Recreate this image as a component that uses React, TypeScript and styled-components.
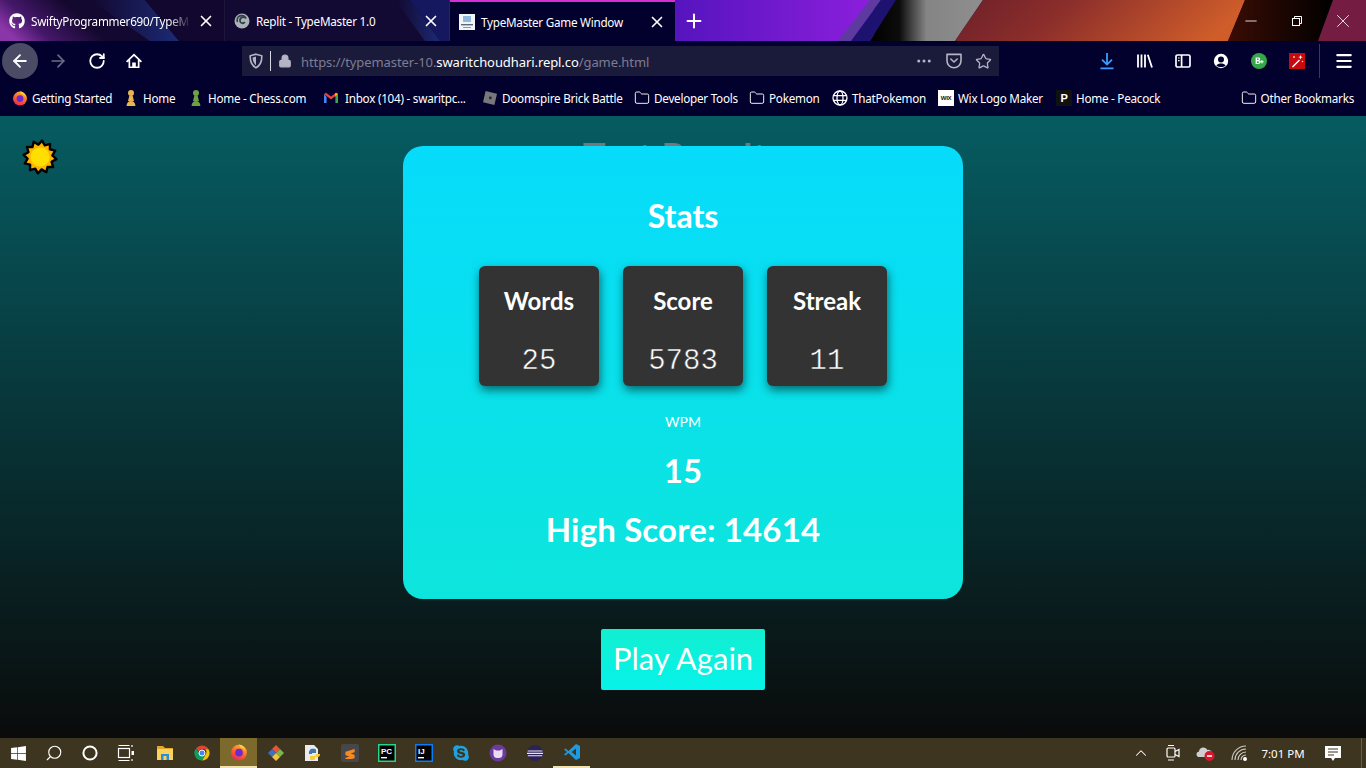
import React from 'react'
import styled, { createGlobalStyle } from 'styled-components'
import { ArrowLeft, ArrowRight, RotateCw, Lock, Star, MoreHorizontal, X, Plus, Menu, Minus, ChevronUp, Search, Folder } from 'lucide-react'
import { FaGithub, FaWindows, FaSkype } from 'react-icons/fa'
import { SiSublimetext } from 'react-icons/si'

const UI_FONT = `"Noto Sans", "Open Sans", sans-serif`
const GAME_FONT = `"Lato", "Noto Sans", sans-serif`
const BAR = '#02012e'

const GlobalStyle = createGlobalStyle`
  html, body {
    margin: 0;
    padding: 0;
    height: 100%;
    overflow: hidden;
    background: #000;
  }
  * { box-sizing: border-box; }
`

const Screen = styled.div`
  width: 1366px;
  height: 768px;
  display: flex;
  flex-direction: column;
  overflow: hidden;
`

const TitleBar = styled.div`
  position: relative;
  height: 41px;
  flex: none;
  display: flex;
  background: #130a33;
`

const ThemeArt = styled.svg`
  position: absolute;
  left: 0;
  top: 0;
`

const Tab = styled.div<{ $active?: boolean }>`
  position: relative;
  width: 225px;
  height: 41px;
  flex: none;
  display: flex;
  align-items: center;
  padding: 0 9px 0 9px;
  gap: 6px;
  color: #fff;
  font: 11.7px ${UI_FONT};
  letter-spacing: -0.25px;
  background: ${({ $active }) => ($active ? BAR : 'transparent')};
  border-top: ${({ $active }) => ($active ? '2px solid #d62fd2' : '0')};
  border-right: ${({ $active }) => ($active ? '0' : '1px solid rgba(255,255,255,.06)')};
`

const TabText = styled.span<{ $fade?: boolean }>`
  flex: 1;
  white-space: nowrap;
  -webkit-mask-image: ${({ $fade }) => ($fade ? 'linear-gradient(90deg, #000 86%, transparent)' : 'none')};
  mask-image: ${({ $fade }) => ($fade ? 'linear-gradient(90deg, #000 86%, transparent)' : 'none')};
`

const NewTab = styled.div`
  position: relative;
  width: 40px;
  margin-left: -1px;
  display: flex;
  align-items: center;
  justify-content: center;
  color: #fff;
`

const WindowButtons = styled.div`
  position: relative;
  margin-left: auto;
  display: flex;
  height: 41px;
`

const WindowButton = styled.div`
  width: 46px;
  display: flex;
  align-items: center;
  justify-content: center;
  color: #fff;
`

const NavBar = styled.div`
  height: 40px;
  flex: none;
  display: flex;
  align-items: center;
  background: ${BAR};
  color: #fff;
`

const NavButton = styled.div<{ $w: number; $round?: boolean; $dim?: boolean }>`
  width: ${({ $w }) => $w}px;
  height: 36px;
  flex: none;
  display: flex;
  align-items: center;
  justify-content: center;
  border-radius: ${({ $round }) => ($round ? '50%' : '0')};
  background: ${({ $round }) => ($round ? '#4b4b66' : 'transparent')};
  color: ${({ $dim }) => ($dim ? '#6d6c86' : '#fff')};
`

const NavStart = styled.div`
  width: 242px;
  flex: none;
  display: flex;
  align-items: center;
  padding-left: 2px;
`

const UrlBar = styled.div`
  width: 757px;
  height: 30px;
  flex: none;
  display: flex;
  align-items: center;
  background: #1a1b3b;
  color: #8b8b9e;
  font: 13px ${UI_FONT};
  padding: 0 7px 0 6px;
`

const UrlDivider = styled.span`
  width: 1px;
  height: 20px;
  background: #d8d8e0;
  margin: 0 7px 0 6px;
`

const UrlText = styled.span`
  flex: 1;
  margin-left: 9px;
  padding-top: 1px;
  white-space: nowrap;
  letter-spacing: -0.08px;
  color: #7d7d92;
`

const UrlHost = styled.span`
  color: #fff;
`

const UrlIcons = styled.div`
  display: flex;
  align-items: center;
  gap: 12px;
  color: #b4b4c4;
`

const ToolIcons = styled.div`
  display: flex;
  align-items: center;
  margin-left: 89px;
`

const ToolDivider = styled.span`
  width: 1px;
  height: 34px;
  background: #3a3a58;
  margin: 0 5px 0 3px;
`

const Bookmarks = styled.div`
  height: 35px;
  flex: none;
  display: flex;
  align-items: center;
  background: ${BAR};
  padding-left: 12px;
  padding-bottom: 1px;
`

const Bookmark = styled.div<{ $w: number; $gap?: number }>`
  width: ${({ $w }) => $w}px;
  flex: none;
  display: flex;
  align-items: center;
  gap: ${({ $gap }) => $gap ?? 4}px;
  color: #fff;
  font: 11.7px ${UI_FONT};
  letter-spacing: -0.25px;
  white-space: nowrap;
`

const BookmarkEnd = styled(Bookmark)`
  margin-left: auto;
  padding-right: 12px;
  width: auto;
`

const WixBadge = styled.span`
  width: 16px;
  height: 16px;
  background: #fff;
  color: #111;
  font: bold 6px "Liberation Sans", sans-serif;
  letter-spacing: -0.3px;
  display: flex;
  align-items: center;
  justify-content: center;
`

const PeacockBadge = styled.span`
  width: 16px;
  height: 16px;
  background: #111;
  color: #fff;
  font: bold 11px "Liberation Sans", sans-serif;
  display: flex;
  align-items: center;
  justify-content: center;
`

const Page = styled.main`
  position: relative;
  flex: 1;
  display: flex;
  flex-direction: column;
  align-items: center;
  padding-top: 30px;
  background: linear-gradient(#065c62, #0a0b0b);
`

const SunToggle = styled.svg`
  position: absolute;
  left: 22px;
  top: 23px;
`

const HiddenTitle = styled.h1`
  position: absolute;
  top: 17px;
  left: 0;
  right: 0;
  margin: 0;
  text-align: center;
  font: bold 38px ${GAME_FONT};
  color: #777;
`

const Card = styled.section`
  position: relative;
  width: 560px;
  height: 453px;
  border-radius: 20px;
  background: linear-gradient(#06dcfb, #0de5dc);
  color: #fff;
  font-family: ${GAME_FONT};
  display: flex;
  flex-direction: column;
  align-items: center;
  padding-top: 51px;
`

const CardTitle = styled.h2`
  margin: 0;
  font-size: 32px;
  line-height: 38px;
  font-weight: 700;
`

const StatRow = styled.div`
  display: flex;
  gap: 24px;
  margin-top: 31px;
`

const StatBox = styled.div`
  width: 120px;
  height: 120px;
  border-radius: 6px;
  background: #333;
  box-shadow: 1px 4px 10px rgba(0, 0, 0, 0.55);
  display: flex;
  flex-direction: column;
  align-items: center;
  padding-top: 20px;
`

const StatLabel = styled.div`
  font-size: 24px;
  line-height: 30px;
  font-weight: 700;
`

// Liberation Mono is heavier than the Courier of the picture, the stroke in the box colour thins it
const StatValue = styled.div`
  margin-top: 29px;
  font: 29px/34px "Liberation Mono", monospace;
  -webkit-text-stroke: 0.5px #333;
`

const WpmLabel = styled.div`
  margin-top: 26px;
  font-size: 14px;
  line-height: 20px;
`

const BigLine = styled.div<{ $top: number }>`
  margin-top: ${({ $top }) => $top}px;
  font-size: 33px;
  line-height: 40px;
  font-weight: 700;
  letter-spacing: 0.15px;
`

const PlayAgain = styled.button`
  margin-top: 30px;
  width: 164px;
  height: 61px;
  padding: 0 0 3px;
  border: 0;
  border-radius: 2px;
  background: linear-gradient(#12efd0, #06f2ea);
  color: #fff;
  font: 31px ${GAME_FONT};
`

const Taskbar = styled.footer`
  height: 30px;
  flex: none;
  display: flex;
  align-items: center;
  background: #3e3520;
  color: #fff;
`

const TaskSlot = styled.div<{ $w: number; $active?: boolean; $open?: boolean }>`
  width: ${({ $w }) => $w}px;
  height: 30px;
  flex: none;
  display: flex;
  align-items: center;
  justify-content: center;
  background: ${({ $active }) => ($active ? '#7b6a2c' : 'transparent')};
  border-bottom: ${({ $active, $open }) => ($active || $open ? '2px solid #f0e2b0' : '0')};
`

const AppIcons = styled.div`
  display: flex;
  margin-left: 2px;
`

const Tray = styled.div`
  margin-left: auto;
  display: flex;
  align-items: center;
`

const Clock = styled.div`
  width: 56px;
  margin-right: 5px;
  text-align: center;
  font: 11.5px ${UI_FONT};
`

const TrayEdge = styled.span`
  width: 1px;
  height: 30px;
  background: #6a5f40;
  margin-left: 11px;
  margin-right: 4px;
`

function ThemeBackground (): React.ReactElement {
  return (
    <ThemeArt width={1366} height={41}>
      <defs>
        <linearGradient id='leftGlow' x1='0' x2='1' y1='0.6' y2='0.4'>
          <stop offset='0' stopColor='#8a35a8' />
          <stop offset='0.14' stopColor='#45186a' />
          <stop offset='0.38' stopColor='#14082f' />
          <stop offset='1' stopColor='#110830' />
        </linearGradient>
        <linearGradient id='blueWedge' x1='0' x2='1' y1='0' y2='0'>
          <stop offset='0' stopColor='#12082f' />
          <stop offset='1' stopColor='#1c2a74' />
        </linearGradient>
        <linearGradient id='violet' x1='0' x2='1' y1='0' y2='0'>
          <stop offset='0' stopColor='#5514be' />
          <stop offset='1' stopColor='#8c1fdc' />
        </linearGradient>
        <linearGradient id='steel' x1='0' x2='1' y1='0' y2='0'>
          <stop offset='0' stopColor='#000' />
          <stop offset='0.26' stopColor='#0c0c0c' />
          <stop offset='0.5' stopColor='#858585' />
          <stop offset='1' stopColor='#8e8e8e' />
        </linearGradient>
        <linearGradient id='ember' x1='0' x2='1' y1='0' y2='0.15'>
          <stop offset='0' stopColor='#6d2029' />
          <stop offset='0.4' stopColor='#8c2e2b' />
          <stop offset='1' stopColor='#cf5d2a' />
        </linearGradient>
        <linearGradient id='soot' x1='0' x2='1' y1='0' y2='0'>
          <stop offset='0' stopColor='#3a0c04' />
          <stop offset='1' stopColor='#000' />
        </linearGradient>
      </defs>
      <rect width={225} height={41} fill='url(#leftGlow)' />
      <polygon points='90,0 145,0 179,41 150,41' fill='url(#blueWedge)' />
      <polygon points='179,41 145,0 225,0 225,41' fill='#12082f' />
      <polygon points='395,0 410,0 440,41 425,41' fill='url(#blueWedge)' />
      <polygon points='410,0 450,0 450,41 440,41' fill='#16185f' />
      <rect x={674} width={200} height={41} fill='url(#violet)' />
      <polygon points='870,0 881,0 851,41 838,41' fill='#5e3aa0' />
      <polygon points='881,0 896,0 870,41 851,41' fill='#1e1270' />
      <polygon points='896,0 983,0 955,41 870,41' fill='url(#steel)' />
      <polygon points='983,0 1245,0 1228,41 955,41' fill='url(#ember)' />
      <polygon points='1245,0 1333,0 1318,41 1228,41' fill='url(#soot)' />
      <polygon points='1333,0 1366,0 1366,41 1318,41' fill='#741c42' />
    </ThemeArt>
  )
}

function FirefoxIcon ({ size = 16 }: { size?: number }): React.ReactElement {
  return (
    <svg width={size} height={size} viewBox='0 0 16 16'>
      <defs>
        <linearGradient id='ffBody' x1='0.7' x2='0.2' y1='0' y2='1'>
          <stop offset='0' stopColor='#ffb52e' />
          <stop offset='0.55' stopColor='#ff5a2c' />
          <stop offset='1' stopColor='#e0246a' />
        </linearGradient>
      </defs>
      <circle cx={8} cy={8.6} r={7} fill='url(#ffBody)' />
      <circle cx={8} cy={8.6} r={3.4} fill='#6a2bd0' />
      <path d='M8 1c3 1 5.5 3 6 6.5-1-2-2.5-3-4.5-3.5z' fill='#ffd04a' />
    </svg>
  )
}

function PawnIcon ({ color }: { color: string }): React.ReactElement {
  return (
    <svg width={16} height={18} viewBox='0 0 16 18'>
      <circle cx={8} cy={4} r={3} fill={color} />
      <path d='M6.4 6.5h3.2L11 12H5zM3.6 17c0-3 1.5-5 4.4-5s4.4 2 4.4 5z' fill={color} />
    </svg>
  )
}

function GmailIcon (): React.ReactElement {
  return (
    <svg width={16} height={16} viewBox='0 0 16 16'>
      <path d='M1 4v9h2.6V7z' fill='#4285f4' />
      <path d='M15 4v9h-2.6V7z' fill='#34a853' />
      <path d='M1 4l7 5.4L15 4l-2-1.2L8 6.4 3 2.8z' fill='#ea4335' />
      <path d='M12.4 7L15 4l-2-1.2-1 .8z' fill='#fbbc04' />
    </svg>
  )
}

function RobloxIcon (): React.ReactElement {
  return (
    <svg width={16} height={16} viewBox='0 0 16 16'>
      <polygon points='3.6,1 15,3.8 12.4,15 1,12.2' fill='#77777c' />
      <rect x={7} y={6.6} width={2.6} height={2.6} fill='#2b2b34' />
    </svg>
  )
}

function GlobeIcon (): React.ReactElement {
  return (
    <svg width={16} height={16} viewBox='0 0 16 16' fill='none' stroke='#fff' strokeWidth={1.3}>
      <circle cx={8} cy={8} r={7} />
      <ellipse cx={8} cy={8} rx={3} ry={7} />
      <path d='M1.3 5.6h13.4M1.3 10.4h13.4' />
    </svg>
  )
}

function ShieldIcon (): React.ReactElement {
  return (
    <svg width={16} height={16} viewBox='0 0 16 16' fill='none'>
      <path d='M8 1.2l5.8 1.6c.2 5.4-1.6 9.6-5.8 12-4.2-2.4-6-6.6-5.8-12z' stroke='#b4b4c4' strokeWidth={1.6} />
      <path d='M8 3.6v8.6c-2.4-1.8-3.4-4.4-3.4-7.6z' fill='#b4b4c4' />
    </svg>
  )
}

function PocketIcon (): React.ReactElement {
  return (
    <svg width={18} height={18} viewBox='0 0 18 18' fill='none' stroke='#b4b4c4' strokeWidth={1.6} strokeLinecap='round' strokeLinejoin='round'>
      <path d='M2 2.4h14v6.4a7 7 0 0 1-14 0z' />
      <path d='M5.8 7L9 10l3.2-3' />
    </svg>
  )
}

function HomeIcon (): React.ReactElement {
  return (
    <svg width={18} height={18} viewBox='0 0 18 18'>
      <path d='M9 1.5L1 9.2l1.2 1.2L3.5 9.2V16h11V9.2l1.3 1.2L17 9.2zM5.2 14.4V7.6L9 3.9l3.8 3.7v6.8h-2v-4H7.2v4z' fill='#fff' />
    </svg>
  )
}

function DownloadIcon (): React.ReactElement {
  return (
    <svg width={18} height={18} viewBox='0 0 18 18' fill='none' stroke='#3d9bff' strokeWidth={1.8}>
      <path d='M9 1v11M4 7.6L9 12.6l5-5M2.5 16.4h13' />
    </svg>
  )
}

function LibraryIcon (): React.ReactElement {
  return (
    <svg width={18} height={18} viewBox='0 0 18 18' fill='none' stroke='#fff' strokeWidth={1.8}>
      <path d='M2 2.5v13M5.5 2.5v13M9 2.5v13M11.8 2.8L16 15.5' />
    </svg>
  )
}

function SidebarIcon (): React.ReactElement {
  return (
    <svg width={18} height={18} viewBox='0 0 18 18' fill='none' stroke='#fff' strokeWidth={1.7}>
      <rect x={2} y={3} width={14} height={12} rx={1.6} />
      <path d='M7.6 3v12' />
      <path d='M4 6h1.6M4 8.6h1.6' strokeWidth={1.2} />
    </svg>
  )
}

function AccountIcon (): React.ReactElement {
  return (
    <svg width={16} height={16} viewBox='0 0 16 16'>
      <circle cx={8} cy={8} r={7.2} fill='#fff' />
      <circle cx={8} cy={6.6} r={3} fill={BAR} />
      <path d='M3.4 12.4C4.6 10.8 6 10.4 8 10.4s3.4.4 4.6 2C11.4 13.6 9.8 14 8 14s-3.4-.4-4.6-1.6z' fill={BAR} />
    </svg>
  )
}

function GradeIcon (): React.ReactElement {
  return (
    <svg width={18} height={18} viewBox='0 0 18 18'>
      <circle cx={9} cy={9} r={8} fill='#36a64a' />
      <path d='M5.6 5.4h2.6c1.4 0 2 .7 2 1.7 0 .7-.4 1.2-1 1.4.8.2 1.2.8 1.2 1.6 0 1.2-.8 1.9-2.2 1.9H5.6zM7 6.5v1.6h1c.5 0 .8-.3.8-.8s-.3-.8-.8-.8zm0 2.7v1.8h1.1c.6 0 .9-.3.9-.9s-.3-.9-.9-.9zM11.4 8h1v1.2h1.2v1h-1.2v1.2h-1v-1.2h-1.2v-1h1.2z' fill='#fff' />
    </svg>
  )
}

function WandIcon (): React.ReactElement {
  return (
    <svg width={16} height={16} viewBox='0 0 16 16'>
      <rect width={16} height={16} fill='#c80a0f' />
      <path d='M3 13.5l7-7 1 1-7 7z' fill='#fff' />
      <path d='M11.5 2l.6 1.6 1.6.6-1.6.6-.6 1.6-.6-1.6-1.6-.6 1.6-.6z' fill='#fff' />
      <circle cx={5} cy={4} r={0.9} fill='#ffd9a0' />
      <circle cx={13.5} cy={8.5} r={0.8} fill='#ffd9a0' />
    </svg>
  )
}

function RestoreIcon (): React.ReactElement {
  return (
    <svg width={10} height={10} viewBox='0 0 10 10' fill='none' stroke='#fff'>
      <rect x={0.5} y={2.5} width={7} height={7} />
      <path d='M2.5 2.5V.5h7v7h-2' />
    </svg>
  )
}

function ReplitFavicon (): React.ReactElement {
  return (
    <svg width={16} height={16} viewBox='0 0 16 16' fill='none'>
      <circle cx={8} cy={8} r={7.5} fill='#a9b2b6' />
      <path d='M3.5 9A4.6 4.6 0 0 1 12 5.4 3.4 3.4 0 0 0 6 8a2.6 2.6 0 0 0 4.8 1' stroke='#33414a' strokeWidth={1.8} />
    </svg>
  )
}

function GameFavicon (): React.ReactElement {
  return (
    <svg width={16} height={16} viewBox='0 0 16 16'>
      <rect width={16} height={16} fill='#f2f5f8' />
      <rect x={4} y={2} width={8} height={6} fill='#8fb8dc' />
      <rect x={2} y={10} width={12} height={1.4} fill='#5a6a7c' />
      <rect x={4} y={13} width={8} height={1} fill='#8c97a5' />
    </svg>
  )
}

function SunIcon (): React.ReactElement {
  const points: string[] = []
  for (let i = 0; i < 24; i++) {
    const angle = (i / 24) * Math.PI * 2 + 0.13
    const radius = i % 2 === 0 ? 16.5 : 12.5
    points.push(`${(18 + Math.cos(angle) * radius).toFixed(1)},${(18 + Math.sin(angle) * radius).toFixed(1)}`)
  }
  return (
    <SunToggle width={36} height={36} viewBox='0 0 36 36'>
      <polygon points={points.join(' ')} fill='#ffb400' stroke='#000' strokeWidth={2.4} strokeLinejoin='round' />
      <circle cx={18} cy={18} r={9.5} fill='#ffde00' />
    </SunToggle>
  )
}

function CortanaIcon (): React.ReactElement {
  return (
    <svg width={18} height={18} viewBox='0 0 18 18' fill='none' stroke='#fff' strokeWidth={2}>
      <circle cx={9} cy={9} r={6.6} />
    </svg>
  )
}

function TaskViewIcon (): React.ReactElement {
  return (
    <svg width={18} height={18} viewBox='0 0 18 18' fill='none' stroke='#fff' strokeWidth={1.2}>
      <rect x={1.5} y={4.5} width={11} height={9} />
      <path d='M1.5 1.5h11M1.5 16.5h11M15 1v2M15 15v2' />
      <rect x={14.5} y={7} width={2.5} height={4} fill='#fff' stroke='none' />
    </svg>
  )
}

function ExplorerIcon (): React.ReactElement {
  return (
    <svg width={18} height={16} viewBox='0 0 18 16'>
      <path d='M1 1h6l2 2h8v2H1z' fill='#e0a92e' />
      <rect x={1} y={4} width={16} height={11} fill='#fbd35c' />
      <rect x={5} y={9} width={8} height={6} fill='#2a8fd8' />
      <rect x={7.5} y={11} width={3} height={4} fill='#fbd35c' />
    </svg>
  )
}

function ChromeIcon (): React.ReactElement {
  return (
    <svg width={16} height={16} viewBox='0 0 16 16'>
      <path d='M8 .5a7.5 7.5 0 0 1 6.5 3.75H8A3.75 3.75 0 0 0 4.6 6.4L2.2 3.2A7.5 7.5 0 0 1 8 .5z' fill='#db4437' />
      <path d='M14.5 4.25A7.5 7.5 0 0 1 8 15.5l3.2-5.6a3.75 3.75 0 0 0 0-5.65z' fill='#f4c20d' />
      <path d='M8 15.5A7.5 7.5 0 0 1 2.2 3.2l3.2 5.6A3.75 3.75 0 0 0 11.2 9.9z' fill='#0f9d58' />
      <circle cx={8} cy={8} r={3} fill='#4285f4' stroke='#fff' />
    </svg>
  )
}

function GitIcon (): React.ReactElement {
  return (
    <svg width={18} height={18} viewBox='0 0 18 18'>
      <polygon points='9,1 13,5 9,9 5,5' fill='#e8543a' />
      <polygon points='5,5 9,9 5,13 1,9' fill='#3d6fc4' />
      <polygon points='13,5 17,9 13,13 9,9' fill='#7ab648' />
      <polygon points='9,9 13,13 9,17 5,13' fill='#f2c341' />
    </svg>
  )
}

function PythonFileIcon (): React.ReactElement {
  return (
    <svg width={17} height={18} viewBox='0 0 17 18'>
      <path d='M1 1h9l4 4v12H1z' fill='#e9e9ee' />
      <path d='M6 6c0-1.6 6-1.6 6 0v3H8v1H5V8c0-1 1-2 1-2z' fill='#3c78aa' />
      <path d='M16 10c0 2-1 3-2 3h-3v2c0 1.4-5 1.4-5 0v-3h5c1 0 1-2 1-2z' fill='#f6cc3d' />
    </svg>
  )
}

function SublimeIcon (): React.ReactElement {
  return (
    <svg width={18} height={18} viewBox='0 0 18 18'>
      <rect width={18} height={18} rx={2} fill='#47474b' />
      <foreignObject x={3} y={3} width={12} height={12}>
        <SiSublimetext size={12} color='#f68a1f' />
      </foreignObject>
    </svg>
  )
}

function IdeIcon ({ label, edge }: { label: string; edge: string }): React.ReactElement {
  return (
    <svg width={18} height={18} viewBox='0 0 18 18'>
      <rect x={0.75} y={0.75} width={16.5} height={16.5} fill='#000' stroke={edge} strokeWidth={1.5} />
      <text x={3} y={10} fontSize={8} fontWeight={700} fontFamily='Liberation Sans, sans-serif' fill='#fff'>{label}</text>
      <rect x={3} y={13} width={6} height={1.4} fill='#fff' />
    </svg>
  )
}

function CatIcon (): React.ReactElement {
  return (
    <svg width={18} height={18} viewBox='0 0 18 18'>
      <circle cx={9} cy={9} r={8.5} fill='#6d3b9e' />
      <path d='M4.5 5l2.6 1.6h3.8L13.5 5v6a3.6 3.6 0 0 1-3.6 3H8.1a3.6 3.6 0 0 1-3.6-3z' fill='#e9ddf4' />
    </svg>
  )
}

function EclipseIcon (): React.ReactElement {
  return (
    <svg width={18} height={18} viewBox='0 0 18 18'>
      <circle cx={9} cy={9} r={8} fill='#2c2255' />
      <path d='M1.6 7h14.8M1 9.4h16M1.8 11.8h14.4' stroke='#e9e6f2' strokeWidth={1.1} />
    </svg>
  )
}

function VsCodeIcon (): React.ReactElement {
  return (
    <svg width={18} height={18} viewBox='0 0 18 18'>
      <path d='M13 1l4 2v12l-4 2L5.5 10l-3 2.4L1 11.5 4 9 1 6.5l1.5-.9 3 2.4zM13 5.4L8.6 9l4.4 3.6z' fill='#1e9be0' />
    </svg>
  )
}

function MeetIcon (): React.ReactElement {
  return (
    <svg width={16} height={18} viewBox='0 0 16 18' fill='none' stroke='#fff' strokeWidth={1.2}>
      <rect x={2} y={4} width={8} height={9} rx={1} />
      <path d='M10 7.5l4-2v7l-4-2M3 1.5h6M3 16h6' />
    </svg>
  )
}

function OneDriveIcon (): React.ReactElement {
  return (
    <svg width={20} height={18} viewBox='0 0 20 18'>
      <path d='M2 13a3 3 0 0 1 1-5.6A4.5 4.5 0 0 1 11.5 6 3.6 3.6 0 0 1 16 9v4z' fill='#cfcfcf' />
      <circle cx={13.5} cy={12} r={5} fill='#d8182a' />
      <rect x={11} y={11.2} width={5} height={1.6} fill='#fff' />
    </svg>
  )
}

function WifiIcon (): React.ReactElement {
  return (
    <svg width={16} height={16} viewBox='0 0 16 16' fill='none' stroke='#fff' strokeWidth={1.1}>
      <path d='M1 15a14 14 0 0 1 14-14M4 15a11 11 0 0 1 11-11M7 15a8 8 0 0 1 8-8M10 15a5 5 0 0 1 5-5' opacity={0.75} />
      <circle cx={14} cy={14} r={1.4} fill='#fff' />
    </svg>
  )
}

function NotifyIcon (): React.ReactElement {
  return (
    <svg width={18} height={18} viewBox='0 0 18 18'>
      <path d='M1 2h16v12h-6l-2 3-2-3H1z' fill='#fff' />
      <path d='M4 5h10M4 8h10M4 11h6' stroke='#3e3520' strokeWidth={1} />
    </svg>
  )
}

const bookmarks = [
  { w: 111, label: 'Getting Started', icon: <FirefoxIcon /> },
  { w: 65, label: 'Home', icon: <PawnIcon color='#e8b552' /> },
  { w: 135, label: 'Home - Chess.com', icon: <PawnIcon color='#6fa044' /> },
  { w: 159, label: 'Inbox (104) - swaritpc...', icon: <GmailIcon />, gap: 6 },
  { w: 152, label: 'Doomspire Brick Battle', icon: <RobloxIcon /> },
  { w: 115, label: 'Developer Tools', icon: <Folder size={16} strokeWidth={1.4} /> },
  { w: 83, label: 'Pokemon', icon: <Folder size={16} strokeWidth={1.4} /> },
  { w: 106, label: 'ThatPokemon', icon: <GlobeIcon /> },
  { w: 118, label: 'Wix Logo Maker', icon: <WixBadge>WIX</WixBadge> },
  { w: 150, label: 'Home - Peacock', icon: <PeacockBadge>P</PeacockBadge> }
]

const stats = [
  { label: 'Words', value: '25' },
  { label: 'Score', value: '5783' },
  { label: 'Streak', value: '11' }
]

const taskApps = [
  { id: 'explorer', icon: <ExplorerIcon /> },
  { id: 'chrome', icon: <ChromeIcon /> },
  { id: 'firefox', icon: <FirefoxIcon size={18} />, active: true },
  { id: 'git', icon: <GitIcon /> },
  { id: 'python', icon: <PythonFileIcon /> },
  { id: 'sublime', icon: <SublimeIcon /> },
  { id: 'pycharm', icon: <IdeIcon label='PC' edge='#21d789' /> },
  { id: 'intellij', icon: <IdeIcon label='IJ' edge='#087cfa' /> },
  { id: 'skype', icon: <FaSkype size={18} color='#1fa3e0' /> },
  { id: 'cat', icon: <CatIcon /> },
  { id: 'eclipse', icon: <EclipseIcon /> },
  { id: 'vscode', icon: <VsCodeIcon />, open: true }
]

export default function App (): React.ReactElement {
  return (
    <Screen>
      <GlobalStyle />
      <TitleBar>
        <ThemeBackground />
        <Tab>
          <FaGithub size={16} />
          <TabText $fade>SwiftyProgrammer690/TypeM</TabText>
          <X size={18} strokeWidth={2.2} />
        </Tab>
        <Tab>
          <ReplitFavicon />
          <TabText>Replit - TypeMaster 1.0</TabText>
          <X size={18} strokeWidth={2.2} />
        </Tab>
        <Tab $active>
          <GameFavicon />
          <TabText>TypeMaster Game Window</TabText>
          <X size={18} strokeWidth={2.2} />
        </Tab>
        <NewTab><Plus size={22} strokeWidth={2.2} /></NewTab>
        <WindowButtons>
          <WindowButton><Minus size={18} strokeWidth={1.1} /></WindowButton>
          <WindowButton><RestoreIcon /></WindowButton>
          <WindowButton><X size={22} strokeWidth={0.9} /></WindowButton>
        </WindowButtons>
      </TitleBar>
      <NavBar>
        <NavStart>
          <NavButton $w={36} $round><ArrowLeft size={20} strokeWidth={2.2} /></NavButton>
          <NavButton $w={40} $dim><ArrowRight size={20} strokeWidth={2} /></NavButton>
          <NavButton $w={38}><RotateCw size={18} strokeWidth={2.4} /></NavButton>
          <NavButton $w={36}><HomeIcon /></NavButton>
        </NavStart>
        <UrlBar>
          <ShieldIcon />
          <UrlDivider />
          <Lock size={14} fill='#b4b4c4' color='#b4b4c4' />
          <UrlText>https://typemaster-10.<UrlHost>swaritchoudhari.repl.co</UrlHost>/game.html</UrlText>
          <UrlIcons>
            <MoreHorizontal size={18} />
            <PocketIcon />
            <Star size={17} strokeWidth={1.8} />
          </UrlIcons>
        </UrlBar>
        <ToolIcons>
          <NavButton $w={38}><DownloadIcon /></NavButton>
          <NavButton $w={38}><LibraryIcon /></NavButton>
          <NavButton $w={38}><SidebarIcon /></NavButton>
          <NavButton $w={38}><AccountIcon /></NavButton>
          <NavButton $w={38}><GradeIcon /></NavButton>
          <NavButton $w={38}><WandIcon /></NavButton>
          <ToolDivider />
          <NavButton $w={38}><Menu size={20} strokeWidth={2.6} /></NavButton>
        </ToolIcons>
      </NavBar>
      <Bookmarks>
        {bookmarks.map((item) => (
          <Bookmark $w={item.w} $gap={item.gap} key={item.label}>{item.icon}{item.label}</Bookmark>
        ))}
        <BookmarkEnd $w={0}><Folder size={16} strokeWidth={1.4} />Other Bookmarks</BookmarkEnd>
      </Bookmarks>
      <Page>
        <SunIcon />
        <HiddenTitle>Test Results</HiddenTitle>
        <Card>
          <CardTitle>Stats</CardTitle>
          <StatRow>
            {stats.map((stat) => (
              <StatBox key={stat.label}>
                <StatLabel>{stat.label}</StatLabel>
                <StatValue>{stat.value}</StatValue>
              </StatBox>
            ))}
          </StatRow>
          <WpmLabel>WPM</WpmLabel>
          <BigLine $top={18}>15</BigLine>
          <BigLine $top={19}>High Score: 14614</BigLine>
        </Card>
        <PlayAgain>Play Again</PlayAgain>
      </Page>
      <Taskbar>
        <TaskSlot $w={36}><FaWindows size={17} /></TaskSlot>
        <TaskSlot $w={36}><Search size={18} strokeWidth={1.5} style={{ transform: 'scaleX(-1)' }} /></TaskSlot>
        <TaskSlot $w={36}><CortanaIcon /></TaskSlot>
        <TaskSlot $w={36}><TaskViewIcon /></TaskSlot>
        <AppIcons>
          {taskApps.map((app) => (
            <TaskSlot $w={37} $active={app.active} $open={app.open} key={app.id}>{app.icon}</TaskSlot>
          ))}
        </AppIcons>
        <Tray>
          <TaskSlot $w={32}><ChevronUp size={18} strokeWidth={1.4} /></TaskSlot>
          <TaskSlot $w={32}><MeetIcon /></TaskSlot>
          <TaskSlot $w={33}><OneDriveIcon /></TaskSlot>
          <TaskSlot $w={33}><WifiIcon /></TaskSlot>
          <Clock>7:01 PM</Clock>
          <TaskSlot $w={34}><NotifyIcon /></TaskSlot>
          <TrayEdge />
        </Tray>
      </Taskbar>
    </Screen>
  )
}
